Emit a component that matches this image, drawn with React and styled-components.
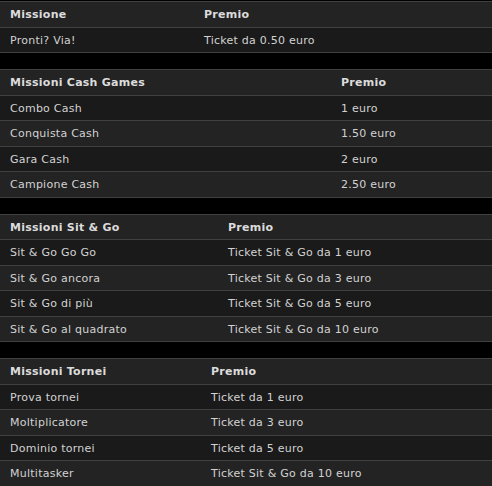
import styled, { createGlobalStyle } from "styled-components";

const GlobalStyle = createGlobalStyle`
  html, body {
    margin: 0;
    padding: 0;
    background: #000;
  }
  body {
    font-family: "DejaVu Sans", Verdana, sans-serif;
  }
`;

const tables = [
  {
    col: 194,
    head: ["Missione", "Premio"],
    rows: [["Pronti? Via!", "Ticket da 0.50 euro"]],
  },
  {
    col: 331,
    head: ["Missioni Cash Games", "Premio"],
    rows: [
      ["Combo Cash", "1 euro"],
      ["Conquista Cash", "1.50 euro"],
      ["Gara Cash", "2 euro"],
      ["Campione Cash", "2.50 euro"],
    ],
  },
  {
    col: 218,
    head: ["Missioni Sit & Go", "Premio"],
    rows: [
      ["Sit & Go Go Go", "Ticket Sit & Go da 1 euro"],
      ["Sit & Go ancora", "Ticket Sit & Go da 3 euro"],
      ["Sit & Go di più", "Ticket Sit & Go da 5 euro"],
      ["Sit & Go al quadrato", "Ticket Sit & Go da 10 euro"],
    ],
  },
  {
    col: 201,
    head: ["Missioni Tornei", "Premio"],
    rows: [
      ["Prova tornei", "Ticket da 1 euro"],
      ["Moltiplicatore", "Ticket da 3 euro"],
      ["Dominio tornei", "Ticket da 5 euro"],
      ["Multitasker", "Ticket Sit & Go da 10 euro"],
    ],
  },
];

const App = () => {
  return (
    <>
      <GlobalStyle />
      <Page>
        {tables.map((t, i) => (
          <Table key={i}>
            <Row $col={t.col} $head>
              <HeadCell>{t.head[0]}</HeadCell>
              <HeadCell>{t.head[1]}</HeadCell>
            </Row>
            {t.rows.map((r, j) => (
              <Row key={j} $col={t.col} $odd={j % 2 === 0}>
                <Cell>{r[0]}</Cell>
                <Cell>{r[1]}</Cell>
              </Row>
            ))}
          </Table>
        ))}
      </Page>
    </>
  );
};

const Page = styled.div`
  width: 492px;
  height: 486px;
  overflow: hidden;
  padding-top: 1px;
  box-sizing: border-box;
  display: flex;
  flex-direction: column;
  gap: 16px;
`;

const Table = styled.div`
  display: flex;
  flex-direction: column;
  border-bottom: 1px solid #404040;
`;

const Row = styled.div`
  display: grid;
  grid-template-columns: ${(p) => p.$col}px 1fr;
  height: 25.5px;
  box-sizing: border-box;
  border-top: 1px solid #404040;
  background: ${(p) => (p.$head ? "#232323" : p.$odd ? "#1a1a1a" : "#232323")};
  align-items: center;
  padding-top: 1px;
`;

const Cell = styled.div`
  padding-left: 10px;
  font-size: 11px;
  letter-spacing: 0.25px;
  color: #d2d2d2;
  white-space: nowrap;
`;

const HeadCell = styled(Cell)`
  font-weight: bold;
  color: #dcdcdc;
`;

export default App;
